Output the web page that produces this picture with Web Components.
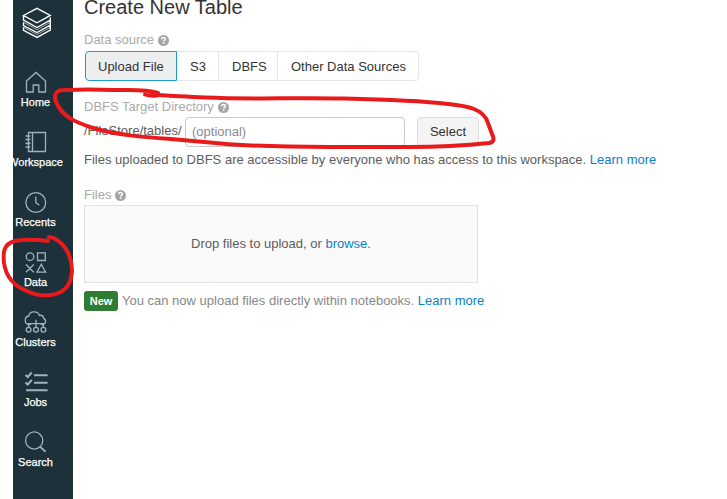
<!DOCTYPE html>
<html lang="en"><head><meta charset="utf-8"><title>Create New Table</title>
<style>
html,body{margin:0;height:100%;overflow:hidden;background:#fff}
body{font:13px/20px "Liberation Sans",Arial,sans-serif;color:#5c5c5c}
</style></head><body>
<app-shell></app-shell>
<script>
const define=(name,html,init)=>customElements.define(name,class extends HTMLElement{
  connectedCallback(){
    if(this.shadowRoot)return;
    const t=document.createElement('template');
    t.innerHTML=html;
    this.attachShadow({mode:'open'}).append(t.content.cloneNode(true));
    if(init)init(this);
  }
});

define('brand-logo',`<style>:host{display:block;height:67px}svg{display:block;padding:7px 0 0 22px}</style>
<svg width="30" height="32" fill="none" stroke="#fff" stroke-width="1.35" stroke-linejoin="miter"><path d="M1.5 8.5 15 1.3 28.3 8.4 15 15.8ZM1.5 8.5V13L15 20.6 28.3 13.2V10.5M1.5 15.3V18.5L15 25.6 28.3 18.2V13M1.5 20.3V23.4L15 30.4 28.3 23.2V18.2"/><path d="M1.5 15.3 15 22.7 28.3 15.3M1.5 20.3 15 27.6 28.3 20.3" stroke-width=".6"/></svg>`);

define('nav-item',`<style>
:host{display:block;height:60px;color:#fff;font-size:11px;line-height:14px;text-align:center}
svg{display:block;margin:0 auto 0 21px;fill:none;stroke:#a0b2bf;stroke-width:1.3}
span{display:block;-webkit-text-stroke:.25px #fff;margin-left:-1px}
</style><svg width="29" height="28" viewBox="0 0 29 28"></svg><span><slot></slot></span>`,el=>{
  const icons={
    home:'<path d="M5.5 14 15 5.4 24.5 14V25H17.8V18H12.2V25H5.5Z"/>',
    workspace:'<path d="M7.5 5.5H24.5V24.5H7.5ZM11.5 5.5V24.5"/><path stroke-width="1.7" d="M4.5 9H9.4M4.5 12.5H9.4M4.5 16.3H9.4M4.5 20H9.4"/>',
    recents:'<circle cx="14.8" cy="15.5" r="9.9"/><path d="M14.8 9.5V15.5L18.3 18.3"/>',
    data:'<circle cx="9" cy="9.7" r="3.8"/><path d="M16.5 5.8H24.3V13.5H16.5ZM5 17.5 12.8 25.3M12.8 17.5 5 25.3M20.3 17.3 24.6 25.1H16Z"/>',
    clusters:'<path d="M10 17.5H8A4.3 4.3 0 0 1 7.7 9C8.5 3.7 16.6 3.5 18.5 8.4 21 7.7 22.7 9.4 22.6 11.3 26 13 24.7 17.5 21.3 17.5H19.8"/><path d="M15 12.8V20M7.6 20V16.7H22.4V20"/><circle cx="7.6" cy="22.8" r="2.4"/><circle cx="15" cy="22.8" r="2.4"/><circle cx="22.4" cy="22.8" r="2.4"/>',
    jobs:'<path stroke-width="2.1" d="M13 8.2H26.6M13 15.8H26.6M5 23.3H26.6"/><path stroke-width="2" d="M4.5 8 6.7 10 10.8 5.5M4.5 15.5 6.7 17.5 10.8 13"/>',
    search:'<circle cx="13.2" cy="13.5" r="8.6"/><path stroke-width="1.9" d="M19 19.6 24.5 24.7"/>'};
  el.shadowRoot.querySelector('svg').innerHTML=icons[el.getAttribute('icon')];
});

define('side-bar',`<style>
:host{display:block;box-sizing:border-box;width:60px;background:#1c3139;overflow:hidden}
nav{margin-left:-13px;width:72px}
</style><nav><brand-logo></brand-logo>
<nav-item icon="home">Home</nav-item><nav-item icon="workspace">Workspace</nav-item><nav-item icon="recents">Recents</nav-item><nav-item icon="data">Data</nav-item><nav-item icon="clusters">Clusters</nav-item><nav-item icon="jobs">Jobs</nav-item><nav-item icon="search">Search</nav-item></nav>`);

define('field-label',`<style>:host{display:flex;align-items:center;gap:4px;height:20px;color:#aaa}</style>
<span><slot></slot></span><svg width="11" height="11"><circle cx="5.5" cy="5.5" r="5.5" fill="#a5a5a5"/><path d="M3.6 4.2C3.8 1.9 7.5 2.1 7.3 4.2 7.2 5.3 5.6 5.3 5.6 6.6" fill="none" stroke="#fff" stroke-width="1.5"/><path d="M4.8 7.5H6.4V9H4.8Z" fill="#fff"/></svg>`);

define('text-link',`<style>:host{color:#0a80c5}</style><slot></slot>`);

define('source-tab',`<style>
:host{display:block;box-sizing:border-box;height:30px;padding:0 12px 0 13px;border:1px solid #e4e4e4;border-left:0;line-height:29px;color:#333;white-space:nowrap}
:host(:last-child){border-radius:0 4px 4px 0}
:host([selected]){padding-left:12px;border:1px solid #1d9fc4;border-radius:4px 0 0 4px;background:#eee;line-height:30px}
</style><slot></slot>`);

define('source-tabs',`<style>:host{display:flex;width:334px;height:30px;margin-left:1px}
source-tab:nth-child(2){width:92px}source-tab:nth-child(3){width:42px}source-tab:nth-child(4){width:59px}source-tab:nth-child(5){width:141px}</style>
<source-tab selected>Upload File</source-tab><source-tab>S3</source-tab><source-tab>DBFS</source-tab><source-tab>Other Data Sources</source-tab>`);

define('directory-row',`<style>
:host{display:flex;height:30px}
.prefix{width:101px;line-height:27px}
.input,.button{box-sizing:border-box;height:30px;border:1px solid #c8c8c8;border-radius:4px;line-height:28px}
.input{width:220px;padding-left:6px;color:#8c8c8c}
.button{width:62px;margin-left:12px;text-align:center;color:#333;background:#f4f4f4;border-color:#ddd}
</style><span class="prefix">/FileStore/tables/</span><div class="input">(optional)</div><div class="button">Select</div>`);

define('drop-zone',`<style>:host{display:flex;box-sizing:border-box;width:394px;height:78px;align-items:center;justify-content:center;border:1px solid #e1e1e1;background:#fafafa}</style>
<span>Drop files to upload, or <text-link>browse</text-link>.</span>`);

define('new-notice',`<style>:host{display:flex;align-items:center;gap:4px;height:20px;color:#888;white-space:nowrap}
b{width:34px;height:20px;border-radius:3px;background:#2e7d32;color:#fff;font-size:11px;line-height:20px;text-align:center}</style>
<b>New</b><span>You can now upload files directly within notebooks. <text-link>Learn more</text-link></span>`);

define('table-form',`<style>
:host{display:block;padding-left:11px}
h1{margin:0;height:30px;font-size:20px;line-height:14px;font-weight:400;color:#333}
source-tabs{margin-top:1px}
.dir{margin-top:16px}
p{margin:3px 0 0;white-space:nowrap}
.files{margin-top:15px}
new-notice{margin-top:8px}
</style><h1>Create New Table</h1>
<field-label>Data source</field-label><source-tabs></source-tabs>
<field-label class="dir">DBFS Target Directory</field-label><directory-row></directory-row>
<p>Files uploaded to DBFS are accessible by everyone who has access to this workspace. <text-link>Learn more</text-link></p>
<field-label class="files">Files</field-label><drop-zone></drop-zone><new-notice></new-notice>`);

define('pen-marks',`<style>:host{position:absolute;inset:0;pointer-events:none}svg{display:block;fill:none;stroke:#e81a1c;stroke-width:4;stroke-linecap:round;stroke-linejoin:round}</style>
<svg width="727" height="499"><path d="M145 94.5C149 96 153 96 157 95.5"/><path d="M158 93C146 89 130 90.5 113 90 94 89 75 89.5 64 90 55 90 53 96 57 104 64 118 78 123 93 128 117 135 142 137 171 139L221 143.5 Q260 147 330 147H410C440 147 470 145 489 143 495 142 494 138 492 134L488 123C484 109 468 106 448 104 423 101 390 99.5 344 98.5 290 97.5 253 99.5 205 97.5 180 96 166 96 151 94.5"/>
<path d="M48 241C37 239.5 25 239 15 241 3 244 3 253 4 263 6 277 14 286 27 291 41 298 57 296 65 289 74 280 73 265 69 255 66 247 58 238 49 237"/></svg>`);

define('app-shell',`<style>:host{display:grid;position:relative;grid-template-columns:60px 1fr;height:499px;padding-left:13px;box-sizing:border-box;overflow:hidden}</style>
<side-bar></side-bar><table-form></table-form><pen-marks></pen-marks>`);
</script></body></html>
